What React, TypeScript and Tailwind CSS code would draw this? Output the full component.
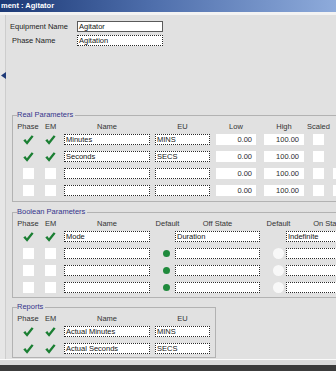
import React from 'react'

type RealRow = { phase: boolean; em: boolean; name: string; eu: string; extra?: boolean }
type BoolRow = { phase: boolean; em: boolean; name: string; off: string; on: string; radios: boolean }
type ReportRow = { name: string; eu: string }

const realRows: RealRow[] = [
  { phase: true, em: true, name: 'Minutes', eu: 'MINS' },
  { phase: true, em: true, name: 'Seconds', eu: 'SECS' },
  { phase: false, em: false, name: '', eu: '', extra: true },
  { phase: false, em: false, name: '', eu: '', extra: true },
]

const boolRows: BoolRow[] = [
  { phase: true, em: true, name: 'Mode', off: 'Duration', on: 'Indefinite', radios: false },
  { phase: false, em: false, name: '', off: '', on: '', radios: true },
  { phase: false, em: false, name: '', off: '', on: '', radios: true },
  { phase: false, em: false, name: '', off: '', on: '', radios: true },
]

const reportRows: ReportRow[] = [
  { name: 'Actual Minutes', eu: 'MINS' },
  { name: 'Actual Seconds', eu: 'SECS' },
]

function Check() {
  return (
    <svg width="11" height="10" viewBox="0 0 11 10">
      <path d="M0.3 5.4 L2.3 4 L3.9 6.3 L8.7 0.2 L10.6 1.6 L4.1 9.8 Z" fill="#1b7f33" />
    </svg>
  )
}

function Tick({ on }: { on: boolean }) {
  return on ? <Check /> : <div className="h-[11px] w-[11px] bg-white" />
}

function Field({ value, className }: { value: string; className: string }) {
  return (
    <div
      className={`flex h-[11px] shrink-0 items-center whitespace-nowrap border border-dotted border-[#2a2a2a] bg-white px-[1px] leading-[9px] text-[#141414] ${className}`}
    >
      {value}
    </div>
  )
}

function Num({ value, className }: { value: string; className: string }) {
  return (
    <div className={`flex h-[11px] shrink-0 items-center justify-end bg-white leading-[9px] text-[#2a2a2a] ${className}`}>
      {value}
    </div>
  )
}

function Head({ label, className }: { label: string; className: string }) {
  return <div className={`flex shrink-0 justify-center whitespace-nowrap ${className}`}>{label}</div>
}

function Group({ title, className, children }: { title: string; className: string; children: React.ReactNode }) {
  return (
    <fieldset className={`ml-[6px] shrink-0 border border-[#b2b2b2] pl-[4px] ${className}`}>
      <legend className="pr-[2px] leading-[10px] text-[#34348c]">{title}</legend>
      {children}
    </fieldset>
  )
}

export default function App() {
  return (
    <div className="flex h-[371px] w-[336px] flex-col overflow-hidden bg-[#e1e1e1] font-['Liberation_Sans',Arial,sans-serif] text-[7.5px] text-[#1c1c1c]">
      <div className="h-[12px] shrink-0 bg-[linear-gradient(to_right,#1c3976,#4e6eab_45%,#8eabdb)] pl-[1px] text-[7.5px] font-bold leading-[12px] text-white">
        ment : Agitator
      </div>
      <div className="h-[3px] shrink-0 bg-[#f3f3f3]" />

      <div className="flex min-h-0 flex-1">
        <div className="w-[6px] shrink-0 border-r border-[#cdcdcd] bg-[#e6e6e6]">
          <svg className="ml-[1px] mt-[57px]" width="5" height="7" viewBox="0 0 5 7">
            <path d="M5 0 L0 3.5 L5 7 Z" fill="#1f3a78" />
          </svg>
        </div>

        <div className="min-w-0 flex-1">
          <div className="mt-[6px] flex h-[11px] items-center pl-[4px]">
            <div className="w-[67px] shrink-0">Equipment Name</div>
            <div className="flex h-[11px] w-[86px] shrink-0 items-center border border-[#5a5a5a] bg-white px-[1px] leading-[9px] text-[#141414]">
              Agitator
            </div>
          </div>
          <div className="mt-[3px] flex h-[11px] items-center pl-[6px]">
            <div className="w-[65px] shrink-0">Phase Name</div>
            <Field value="Agitation" className="w-[86px]" />
          </div>

          <Group title="Real Parameters" className="mt-[64px] w-[340px] pb-[5px]">
            <div className="mt-[2px] flex h-[10px] items-center text-[#333]">
              <Head label="Phase" className="w-[22px]" />
              <Head label="EM" className="w-[23px]" />
              <Head label="Name" className="ml-[2px] w-[86px]" />
              <Head label="EU" className="ml-[5px] w-[55px]" />
              <Head label="Low" className="ml-[6px] w-[40px]" />
              <Head label="High" className="ml-[8px] w-[40px]" />
              <Head label="Scaled" className="ml-[9px] w-[11px]" />
            </div>
            <div className="mt-[2px] flex flex-col gap-[6px]">
              {realRows.map((r, i) => (
                <div key={i} className="flex h-[11px] items-center">
                  <div className="flex w-[22px] shrink-0 justify-center"><Tick on={r.phase} /></div>
                  <div className="flex w-[23px] shrink-0 justify-center"><Tick on={r.em} /></div>
                  <Field value={r.name} className="ml-[2px] w-[86px]" />
                  <Field value={r.eu} className="ml-[5px] w-[55px]" />
                  <Num value="0.00" className="ml-[6px] w-[40px] pr-[4px]" />
                  <Num value="100.00" className="ml-[8px] w-[40px] pr-[5px]" />
                  <div className="ml-[9px] h-[11px] w-[11px] shrink-0 bg-white" />
                  {r.extra && <div className="ml-[9px] h-[11px] w-[11px] shrink-0 bg-white" />}
                </div>
              ))}
            </div>
          </Group>

          <Group title="Boolean Parameters" className="mt-[5px] w-[340px] pb-[4px]">
            <div className="mt-[2px] flex h-[10px] items-center text-[#333]">
              <Head label="Phase" className="w-[22px]" />
              <Head label="EM" className="w-[23px]" />
              <Head label="Name" className="ml-[2px] w-[86px]" />
              <Head label="Default" className="w-[35px]" />
              <Head label="Off State" className="w-[65px]" />
              <Head label="Default" className="w-[57px]" />
              <Head label="On State" className="w-[42px]" />
            </div>
            <div className="mt-[2px] flex flex-col gap-[6px]">
              {boolRows.map((r, i) => (
                <div key={i} className="flex h-[11px] items-center">
                  <div className="flex w-[22px] shrink-0 justify-center"><Tick on={r.phase} /></div>
                  <div className="flex w-[23px] shrink-0 justify-center"><Tick on={r.em} /></div>
                  <Field value={r.name} className="ml-[2px] w-[86px]" />
                  <div className="w-[25px] shrink-0">
                    {r.radios && <div className="ml-[13px] h-[7px] w-[7px] rounded-full bg-[#1f8a3c]" />}
                  </div>
                  <Field value={r.off} className="w-[85px]" />
                  <div className="w-[26px] shrink-0">
                    {r.radios && <div className="ml-[13px] h-[11px] w-[11px] rounded-full bg-[#f8f8f8]" />}
                  </div>
                  <Field value={r.on} className="w-[85px]" />
                </div>
              ))}
            </div>
          </Group>

          <Group title="Reports" className="mt-[4px] w-[204px] pb-[3px]">
            <div className="mt-[2px] flex h-[10px] items-center text-[#333]">
              <Head label="Phase" className="w-[22px]" />
              <Head label="EM" className="w-[23px]" />
              <Head label="Name" className="ml-[2px] w-[86px]" />
              <Head label="EU" className="ml-[5px] w-[55px]" />
            </div>
            <div className="mt-[2px] flex flex-col gap-[6px]">
              {reportRows.map((r, i) => (
                <div key={i} className="flex h-[11px] items-center">
                  <div className="flex w-[22px] shrink-0 justify-center"><Check /></div>
                  <div className="flex w-[23px] shrink-0 justify-center"><Check /></div>
                  <Field value={r.name} className="ml-[2px] w-[86px]" />
                  <Field value={r.eu} className="ml-[5px] w-[55px]" />
                </div>
              ))}
            </div>
          </Group>
        </div>
      </div>

      <div className="h-[1px] shrink-0 bg-[#fafafa]" />
      <div className="h-[5px] shrink-0 bg-[#dcdcdc]" />
      <div className="h-[6px] shrink-0 bg-[#3c3c3c]" />
    </div>
  )
}
